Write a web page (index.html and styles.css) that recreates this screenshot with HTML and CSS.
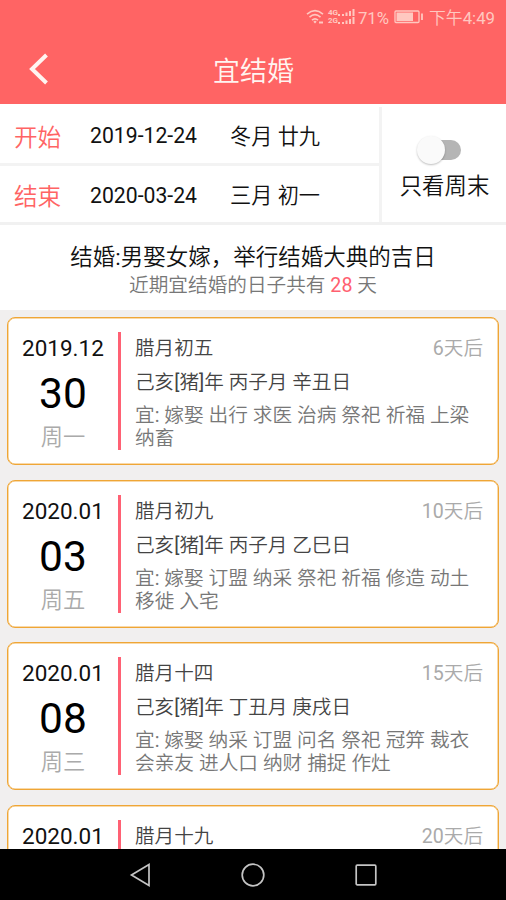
FILE: index.html
```html
<!DOCTYPE html>
<html lang="zh-CN">
<head>
<meta charset="utf-8">
<title>宜结婚</title>
<link rel="stylesheet" href="styles.css">
</head>
<body>
<div class="screen">
  <header class="header">
    <div class="status">
      <svg class="wifi" width="19" height="16" viewBox="0 0 19 16" fill="none" stroke="currentColor" stroke-width="1.6">
        <path d="M1 5.2Q9 -1.8 17 5.2M3.5 8.2Q9 3.2 14.5 8.2M6 11.2Q9 8.4 12 11.2"/>
        <path d="M7.3 12.8L9 11.6L10.7 12.8L9 14.6Z" fill="currentColor" stroke="none"/>
        <path d="M13 13.5h4" stroke-width="2"/>
      </svg>
      <div class="nets"><span>4G</span><span>2G</span></div>
      <svg class="signal" width="17" height="16" viewBox="0 0 17 16" fill="currentColor">
        <path d="M0 5h2v2H0zM4 5h2v2H4zM7.5 3.5h2V7h-2zM11 2h2v5h-2zM14.5 0h2v7h-2zM0 13h2v2H0zM4 13h2v2H4zM7.5 11.5h2V15h-2zM11 10h2v5h-2zM14.5 8h2v7h-2z"/>
      </svg>
      <span class="percent">71%</span>
      <svg class="battery" width="30" height="14" viewBox="0 0 30 14" fill="none" stroke="currentColor">
        <rect x="1" y="1" width="24" height="11.5" rx="1" stroke-width="1.3"/>
        <path d="M2.5 2.5H19V11H2.5z" fill="currentColor" stroke="none"/>
        <path d="M28 3.5v6.5" stroke-width="1.8"/>
      </svg>
      <span class="clock">下午4:49</span>
    </div>
    <div class="titlebar">
      <svg class="back" width="22" height="34" viewBox="0 0 22 34" fill="none" stroke="#fff4f0" stroke-width="4">
        <path d="M18.5 3L4 17L18.5 31"/>
      </svg>
      <h1>宜结婚</h1>
    </div>
  </header>

  <section class="filter">
    <div class="dates">
      <div class="date-row"><span class="label">开始</span><span class="date">2019-12-24</span><span class="lunar">冬月 廿九</span></div>
      <div class="date-row"><span class="label">结束</span><span class="date">2020-03-24</span><span class="lunar">三月 初一</span></div>
    </div>
    <div class="weekend">
      <div class="switch"><i class="track"></i><i class="thumb"></i></div>
      <span>只看周末</span>
    </div>
  </section>

  <section class="summary">
    <p class="desc">结婚:男娶女嫁，举行结婚大典的吉日</p>
    <p class="count">近期宜结婚的日子共有 <b>28</b> 天</p>
  </section>

  <main class="list">
    <article class="card">
      <div class="day"><span class="month">2019.12</span><span class="num">30</span><span class="week">周一</span></div>
      <div class="info">
        <div class="top"><span>腊月初五</span><span class="after">6天后</span></div>
        <p class="ganzhi">己亥[猪]年 丙子月 辛丑日</p>
        <p class="yi">宜: 嫁娶 出行 求医 治病 祭祀 祈福 上梁<br>纳畜</p>
      </div>
    </article>
    <article class="card">
      <div class="day"><span class="month">2020.01</span><span class="num">03</span><span class="week">周五</span></div>
      <div class="info">
        <div class="top"><span>腊月初九</span><span class="after">10天后</span></div>
        <p class="ganzhi">己亥[猪]年 丙子月 乙巳日</p>
        <p class="yi">宜: 嫁娶 订盟 纳采 祭祀 祈福 修造 动土<br>移徙 入宅</p>
      </div>
    </article>
    <article class="card">
      <div class="day"><span class="month">2020.01</span><span class="num">08</span><span class="week">周三</span></div>
      <div class="info">
        <div class="top"><span>腊月十四</span><span class="after">15天后</span></div>
        <p class="ganzhi">己亥[猪]年 丁丑月 庚戌日</p>
        <p class="yi">宜: 嫁娶 纳采 订盟 问名 祭祀 冠笄 裁衣<br>会亲友 进人口 纳财 捕捉 作灶</p>
      </div>
    </article>
    <article class="card">
      <div class="day"><span class="month">2020.01</span></div>
      <div class="info">
        <div class="top"><span>腊月十九</span><span class="after">20天后</span></div>
      </div>
    </article>
  </main>

  <nav class="nav">
    <svg width="24" height="26" viewBox="0 0 24 26"><path d="M2.5 13L20 2.5V23.5Z"/></svg>
    <svg width="24" height="26" viewBox="0 0 24 26"><circle cx="12" cy="13" r="10.8"/></svg>
    <svg width="24" height="26" viewBox="0 0 24 26"><rect x="2.2" y="3.2" width="19.6" height="19.6" rx="1"/></svg>
  </nav>
</div>
</body>
</html>
```
FILE: styles.css
```css
* { box-sizing: border-box; }
body {
  margin: 0;
  font-family: Roboto, "Noto Sans CJK SC DemiLight", "Noto Sans CJK SC", sans-serif;
  font-weight: 400;
  color: #111;
}
h1, p { margin: 0; font-weight: inherit; }
svg { display: block; flex: none; }
.screen {
  display: flex;
  flex-direction: column;
  width: 506px;
  height: 900px;
  overflow: hidden;
  background: #f1efef;
}

.header { flex: none; height: 104px; background: #ff6464; color: #fff4f0; }
.status {
  display: flex;
  align-items: center;
  justify-content: flex-end;
  height: 34px;
  padding-right: 11px;
  font-size: 16.8px;
  color: #ffc8c0;
}
.nets {
  display: flex;
  flex-direction: column;
  margin: 0 0 0 3px;
  font-size: 8px;
  line-height: 8px;
  font-weight: 700;
}
.percent { margin-left: 3px; padding-top: 1px; }
.battery { margin: 0 5px 0 5px; }
.titlebar { display: flex; align-items: center; height: 70px; padding-left: 28px; }
.titlebar h1 {
  flex: 1;
  margin-right: 49px;
  padding-top: 6px;
  text-align: center;
  font-size: 27px;
  line-height: 40px;
}

.filter {
  display: flex;
  flex: none;
  height: 121px;
  background: #fff;
  border-bottom: 3px solid #f1f1f1;
}
.dates { width: 382px; margin-top: 3px; border-right: 3px solid #f3f3f3; }
.date-row {
  display: flex;
  align-items: center;
  height: 58px;
  padding: 0 0 0 14px;
  font-size: 21.2px;
}
.date-row:first-child { height: 59px; padding-top: 1px; border-bottom: 3px solid #f3f3f3; }
.label { width: 76px; font-size: 23.6px; color: #ff6464; }
.date { width: 140px; line-height: 26px; padding-top: 1px; }
.lunar { line-height: 26px; padding-top: 2px; }
.weekend {
  display: flex;
  flex: 1;
  flex-direction: column;
  align-items: center;
  padding: 31px 0 0 1px;
  font-size: 22.4px;
  line-height: 30px;
}
.switch { display: flex; align-items: center; height: 30px; margin-bottom: 6px; margin-left: 17px; }
.track { order: 2; width: 32px; height: 20px; margin-left: -16px; border-radius: 0 10px 10px 0; background: #b5b5b5; }
.thumb {
  order: 3;
  width: 28px;
  height: 28px;
  margin-left: -44px;
  margin-right: 16px;
  border-radius: 50%;
  background: #fafafa;
  box-shadow: 0 1px 2px rgba(0, 0, 0, .25);
}

.summary { flex: none; height: 85px; padding-top: 17px; background: #fff; text-align: center; }
.desc { font-size: 22.5px; line-height: 30px; }
.count { font-size: 19.65px; line-height: 28px; color: #777; }
.count b { font-weight: 400; color: #ff6070; }

.list {
  flex: 1;
  display: flex;
  flex-direction: column;
  gap: 14.5px;
  min-height: 0;
  overflow: hidden;
  padding: 7px 7px 0;
}
.card {
  display: flex;
  flex: none;
  height: 148px;
  padding: 14px 15px 14px 13px;
  border: 1.5px solid #efa636;
  border-radius: 8px;
  box-shadow: inset 0 0 0 .5px #f3b455;
  background: #fff;
}
.day {
  display: flex;
  flex-direction: column;
  width: 100px;
  padding-top: 3px;
  border-right: 3px solid #ff6174;
}
.month { padding-left: 1px; font-size: 22.5px; line-height: 26px; }
.num { width: 84px; margin-top: 8px; text-align: center; font-size: 42.5px; line-height: 50px; color: #000; }
.week { width: 84px; margin-top: 5px; text-align: center; font-size: 22.3px; line-height: 26px; color: #aaa; }
.info { flex: 1; padding: 3px 0 0 14px; font-size: 19.6px; white-space: nowrap; color: #444; }
.top { display: flex; justify-content: space-between; line-height: 28px; }
.after { color: #aaa; }
.ganzhi { margin-top: 6px; line-height: 28px; }
.yi { margin-top: 7px; font-size: 19.7px; line-height: 23.4px; color: #777; }

.nav {
  display: flex;
  flex: none;
  justify-content: center;
  align-items: center;
  gap: 88.5px;
  height: 51px;
  background: #000;
}
.nav svg { fill: none; stroke: #c4c4c4; stroke-width: 1.7; }
```
